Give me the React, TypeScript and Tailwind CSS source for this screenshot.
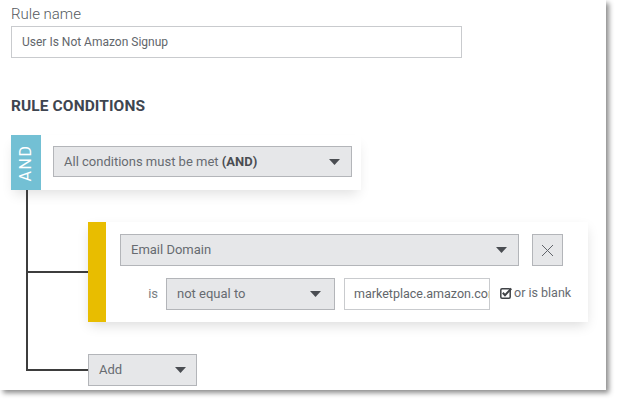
import React from "react";

const Caret = () => (
  <svg width="11" height="6" viewBox="0 0 11 6" className="shrink-0">
    <path d="M0 0 L11 0 L5.5 6 Z" fill="#4a4d52" />
  </svg>
);

export default function App() {
  return (
    <div className="w-[621px] h-[406px] bg-white" style={{ fontFamily: "Roboto, 'Liberation Sans', sans-serif" }}>
      <div className="w-[606px] h-[390px] bg-white shadow-[3px_3px_5px_rgba(0,0,0,0.45)] pl-[11px] pt-[4px] flex flex-col">
        <div className="text-[15px] leading-[20px] font-light text-[#555a60]">Rule name</div>
        <div className="mt-[2px] w-[451px] h-[32px] border border-[#c9cbce] flex items-center pl-[10px] text-[12px] text-[#62666b]">
          User Is Not Amazon Signup
        </div>
        <div className="mt-[38px] text-[15.5px] leading-[20px] font-bold text-[#3e4550] tracking-[0.1px]">RULE CONDITIONS</div>

        {/* header */}
        <div className="mt-[19px] w-[350px] h-[55px] bg-white flex shadow-[0_7px_12px_-3px_rgba(0,0,0,0.12)]">
          <div className="w-[30px] h-[55px] bg-[#73c0d4] flex items-center justify-center">
            <span className="text-white text-[16px] tracking-[1.5px] -rotate-90 whitespace-nowrap">AND</span>
          </div>
          <div className="ml-[12px] mt-[11px] w-[299px] h-[31px] bg-[#e6e7e9] border border-[#b3b5b9] flex items-center justify-between pl-[10px] pr-[11px] text-[13px] text-[#676b71]">
            <span>
              All conditions must be met <span className="font-bold text-[#4a4d52]">(AND)</span>
            </span>
            <Caret />
          </div>
        </div>

        {/* tree */}
        <div className="ml-[15px] flex flex-col">
          <div className="h-[32px] border-l-2 border-[#3d3d3d]" />
          <div className="flex">
            <div className="w-[62px] border-l-2 border-[#3d3d3d] flex items-center">
              <div className="w-full h-[2px] bg-[#3d3d3d]" />
            </div>
            <div className="w-[500px] h-[100px] bg-white flex shadow-[0_5px_12px_-2px_rgba(0,0,0,0.15)]">
              <div className="w-[18px] h-full bg-[#e8bd00]" />
              <div className="flex flex-col pl-[14px] pt-[12px]">
                <div className="flex">
                  <div className="w-[399px] h-[32px] bg-[#e6e7e9] border border-[#b3b5b9] flex items-center justify-between pl-[10px] pr-[11px] text-[13px] text-[#676b71]">
                    <span>Email Domain</span>
                    <Caret />
                  </div>
                  <div className="ml-[13px] w-[31px] h-[32px] bg-[#e6e7e9] border border-[#b3b5b9] flex items-center justify-center">
                    <svg width="13" height="13" viewBox="0 0 13 13">
                      <path d="M1 1 L12 12 M12 1 L1 12" stroke="#60646a" strokeWidth="1" />
                    </svg>
                  </div>
                </div>
                <div className="flex items-center mt-[12px]">
                  <span className="w-[46px] text-right pr-[8px] text-[13px] text-[#7a7e83]">is</span>
                  <div className="w-[169px] h-[32px] bg-[#e6e7e9] border border-[#b3b5b9] flex items-center justify-between pl-[10px] pr-[13px] text-[13px] text-[#676b71]">
                    <span>not equal to</span>
                    <Caret />
                  </div>
                  <div className="ml-[9px] w-[146px] h-[32px] bg-white border border-[#c9cbce] flex items-center pl-[9px] overflow-hidden whitespace-nowrap text-[12.5px] text-[#62666b]">
                    marketplace.amazon.com
                  </div>
                  <div className="ml-[10px] flex items-center -mt-[2px]">
                    <svg width="12" height="12" viewBox="0 0 12 12">
                      <rect x="0.8" y="1.8" width="9.4" height="9.4" rx="1.2" fill="none" stroke="#3f4246" strokeWidth="1.5" />
                      <path d="M2.8 5.8 L5 8.2 L11.3 1.5" fill="none" stroke="#3f4246" strokeWidth="2" />
                    </svg>
                    <span className="ml-[2px] text-[12.5px] text-[#676b71]">or is blank</span>
                  </div>
                </div>
              </div>
            </div>
          </div>
          <div className="h-[32px] border-l-2 border-[#3d3d3d]" />
          <div className="flex">
            <div className="w-[62px] h-[17px] border-l-2 border-b-2 border-[#3d3d3d]" />
            <div className="w-[109px] h-[32px] bg-[#e6e7e9] border border-[#b3b5b9] flex items-center justify-between pl-[10px] pr-[10px] text-[13px] text-[#676b71]">
              <span>Add</span>
              <Caret />
            </div>
          </div>
        </div>
      </div>
    </div>
  );
}
